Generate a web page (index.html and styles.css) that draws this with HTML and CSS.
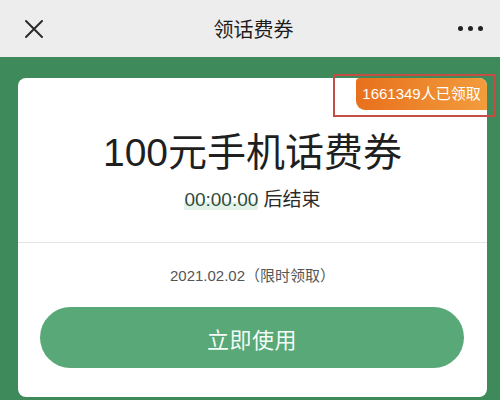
FILE: index.html
```html
<!DOCTYPE html>
<html lang="zh">
<head>
<meta charset="utf-8">
<link rel="stylesheet" href="styles.css">
</head>
<body>
<div class="page">
  <header class="topbar">
    <svg class="close" width="20" height="20" viewBox="0 0 20 20"><path d="M2 2 L18 18 M18 2 L2 18" stroke="#2a2a2a" stroke-width="2" fill="none" stroke-linecap="round"/></svg>
    <div class="title">领话费券</div>
    <div class="more"><span></span><span></span><span></span></div>
  </header>
  <main class="stage">
    <section class="card">
      <div class="badge">1661349人已领取</div>
      <h1 class="amount">100元手机话费券</h1>
      <p class="timer"><span class="digits">00:00:00</span> 后结束</p>
      <hr class="divider">
      <p class="date">2021.02.02（限时领取）</p>
      <button class="use">立即使用</button>
    </section>
  </main>
  <div class="mark"></div>
</div>
</body>
</html>
```
FILE: styles.css
```css
* { box-sizing: border-box; }
html, body { margin: 0; padding: 0; }
body {
  width: 500px;
  height: 400px;
  overflow: hidden;
  font-family: "Liberation Sans", "Noto Sans CJK SC", sans-serif;
  color: #222;
}
.page { position: relative; width: 500px; height: 400px; }
.topbar {
  height: 57px;
  background: #ededed;
  display: grid;
  grid-template-columns: 1fr auto 1fr;
  align-items: center;
  padding: 0 17px 0 24px;
}
.close { display: block; }
.title {
  font-size: 20px;
  color: #1e1e1e;
  font-family: "Noto Sans CJK SC", sans-serif;
}
.more { justify-self: end; display: flex; gap: 5px; }
.more span { width: 5px; height: 5px; border-radius: 50%; background: #222; }
.stage {
  height: 343px;
  background: #3f8a5b;
  padding: 21px 13px 0 18px;
}
.card {
  position: relative;
  height: 319px;
  background: #fff;
  border-radius: 8px;
  padding-top: 52px;
  display: flex;
  flex-direction: column;
  align-items: center;
}
.badge {
  position: absolute;
  top: 0;
  right: 0;
  width: 131px;
  height: 32px;
  border-radius: 4px 8px 0 9px;
  background: linear-gradient(90deg, #e8701c, #f29c3d);
  color: #fff;
  font-size: 15px;
  line-height: 32px;
  text-align: center;
  white-space: nowrap;
}
.amount {
  margin: 0;
  font-size: 39px;
  line-height: 46px;
  font-weight: 400;
  color: #1f1f1f;
}
.timer {
  margin: 12px 0 0;
  font-size: 19px;
  line-height: 24px;
  color: #2a2a2a;
}
.digits {
  color: #2d4a3a;
  background: linear-gradient(transparent 60%, #e3f2e9 60%);
}
.divider {
  align-self: stretch;
  margin: 30px 0 0;
  border: 0;
  height: 1px;
  background: #e4e4e4;
}
.date {
  margin: 22px 0 0;
  font-size: 15px;
  line-height: 22px;
  color: #555;
}
.use {
  align-self: stretch;
  margin: 20px 23px 0 22px;
  height: 61px;
  border: 0;
  border-radius: 31px;
  background: #58a878;
  color: #f4fbf6;
  font-family: "Noto Sans CJK SC", sans-serif;
  font-size: 22px;
  letter-spacing: 0.5px;
}
.mark {
  position: absolute;
  left: 333px;
  top: 74px;
  width: 162px;
  height: 43px;
  border: 2px solid #c44e45;
  pointer-events: none;
}
```
